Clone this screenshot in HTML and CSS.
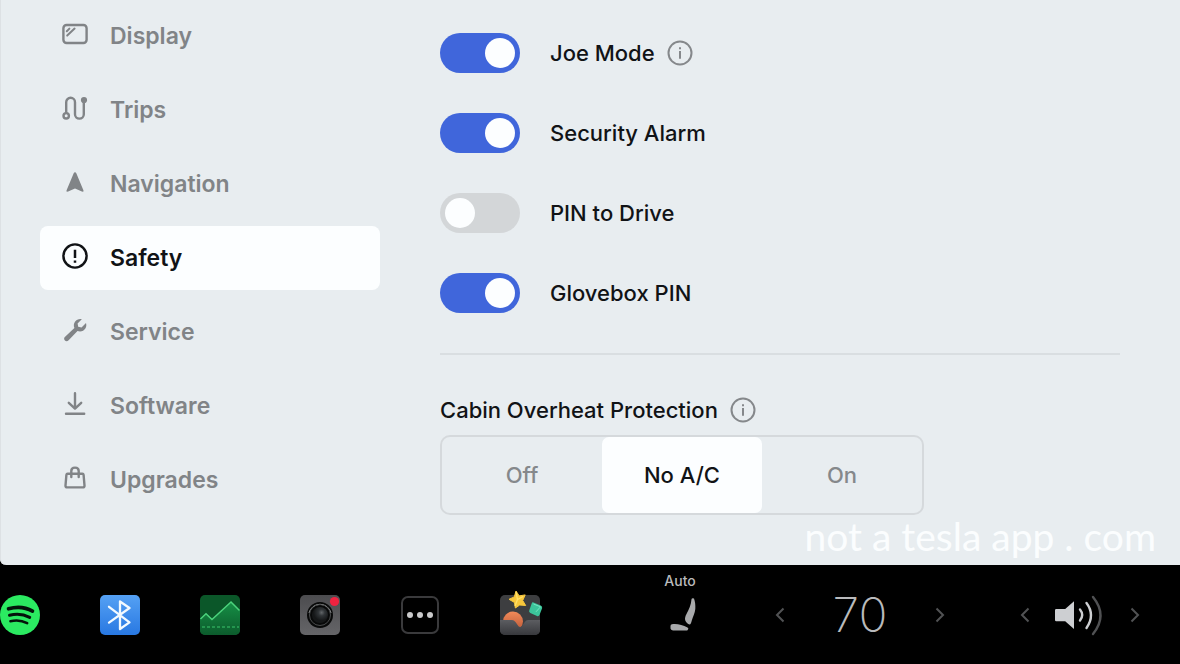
FILE: index.html
```html
<!DOCTYPE html>
<html lang="en">
<head>
<meta charset="utf-8">
<meta name="viewport" content="width=device-width, initial-scale=1">
<title>Safety settings</title>
<link rel="stylesheet" href="styles.css">
</head>
<body>
<main class="settings">
  <nav class="menu" aria-label="Settings">
    <a class="menu-item" href="#display">
      <svg class="menu-icon" viewBox="0 0 30 30" aria-hidden="true"><rect x="3.400" y="6" width="23.200" height="18" rx="3.200"/><path d="M6.800 12.200l2.600-2.600M7.200 16.600l7.400-7" stroke-width="2"/></svg>
      <span>Display</span>
    </a>
    <a class="menu-item" href="#trips">
      <svg class="menu-icon" viewBox="0 0 30 30" aria-hidden="true"><circle cx="6.200" cy="22.800" r="2.700"/><circle class="solid" cx="24" cy="7" r="3.100"/><path d="M6.200 19.600V9.200a4.400 4.400 0 0 1 8.800 0v12a4.400 4.400 0 0 0 8.800 0V8"/></svg>
      <span>Trips</span>
    </a>
    <a class="menu-item" href="#navigation">
      <svg class="menu-icon" viewBox="0 0 30 30" aria-hidden="true"><path class="solid" d="M15 5.200c.6 0 1 .3 1.300 1l7.100 17c.5 1.200-.5 1.900-1.500 1.400L15 21.400l-6.900 3.200c-1 .5-2-.2-1.500-1.400l7.100-17c.3-.7.7-1 1.300-1z"/></svg>
      <span>Navigation</span>
    </a>
    <a class="menu-item menu-item-active" href="#safety" aria-current="page">
      <svg class="menu-icon" viewBox="0 0 30 30" aria-hidden="true"><circle cx="15" cy="15" r="11.600"/><path d="M15 8.800v8.200M15 19.400v2.400" stroke-width="2.500" stroke-linecap="butt"/></svg>
      <span>Safety</span>
    </a>
    <a class="menu-item" href="#service">
      <svg class="menu-icon" viewBox="0 0 30 30" aria-hidden="true"><path class="solid" d="M21.800 4.200l-4.200 4.300 .6 3.300 3.300 .6 4.500-4.300c1 3.300-.4 6.300-2.900 7.700-1.900 1-3.800 1-5.600.3L8.600 25.200c-1.200 1.200-2.600 1.200-3.700.2-1.100-1.200-1-2.600.2-3.700l9.300-8.700c-.9-2-.8-4.300.6-6.200 1.600-2.200 4.200-3.200 6.800-2.600z"/></svg>
      <span>Service</span>
    </a>
    <a class="menu-item" href="#software">
      <svg class="menu-icon" viewBox="0 0 30 30" aria-hidden="true"><path d="M15 4.200v15.300M8.800 13.800l6.200 5.900 6.200-5.900M6 24.800h18.200"/></svg>
      <span>Software</span>
    </a>
    <a class="menu-item" href="#upgrades">
      <svg class="menu-icon" viewBox="0 0 30 30" aria-hidden="true"><path d="M7.600 10.800h14.800c.8 0 1.100.4 1.200 1.100l.9 10.600c.1 1.200-.5 1.900-1.600 1.900H7.100c-1.100 0-1.700-.7-1.600-1.900l.9-10.600c.1-.7.500-1.100 1.200-1.100zM11.300 14V8c0-4.500 7.400-4.500 7.400 0v6"/></svg>
      <span>Upgrades</span>
    </a>
  </nav>

  <section class="panel" id="safety">
    <div class="toggles">
      <div class="toggle-row">
        <input class="switch" type="checkbox" role="switch" id="joe-mode" checked>
        <label for="joe-mode">Joe Mode</label>
        <button class="info" type="button" aria-label="About Joe Mode">
          <svg viewBox="0 0 26 26" aria-hidden="true"><circle cx="13" cy="13" r="11.500"/><path d="M13 11v7.800M13 7.200v2"/></svg>
        </button>
      </div>
      <div class="toggle-row">
        <input class="switch" type="checkbox" role="switch" id="alarm" checked>
        <label for="alarm">Security Alarm</label>
      </div>
      <div class="toggle-row">
        <input class="switch" type="checkbox" role="switch" id="pin-drive">
        <label for="pin-drive">PIN to Drive</label>
      </div>
      <div class="toggle-row">
        <input class="switch" type="checkbox" role="switch" id="glovebox" checked>
        <label for="glovebox">Glovebox PIN</label>
      </div>
    </div>

    <div class="overheat">
      <div class="overheat-head">
        <h2 class="overheat-title" id="overheat-title">Cabin Overheat Protection</h2>
        <button class="info" type="button" aria-label="About Cabin Overheat Protection">
          <svg viewBox="0 0 26 26" aria-hidden="true"><circle cx="13" cy="13" r="11.500"/><path d="M13 11v7.800M13 7.200v2"/></svg>
        </button>
      </div>
      <div class="segments" role="radiogroup" aria-labelledby="overheat-title">
        <label class="segment"><input type="radio" name="overheat" value="off"><span>Off</span></label>
        <label class="segment"><input type="radio" name="overheat" value="no-ac" checked><span>No A/C</span></label>
        <label class="segment"><input type="radio" name="overheat" value="on"><span>On</span></label>
      </div>
    </div>
  </section>
  <p class="watermark">not a tesla app . com</p>
</main>

<footer class="dock">
  <div class="apps">
    <button class="app" type="button" aria-label="Spotify">
      <svg viewBox="0 0 40 40" aria-hidden="true"><circle cx="20" cy="20" r="20" fill="#2bea61"/><g fill="none" stroke="#04130a" stroke-linecap="round"><path d="M8.500 13.800c8-2.300 17.300-1.500 24 2.300" stroke-width="3.600"/><path d="M9.500 20.300c6.800-1.900 14.200-1.100 20.200 2.100" stroke-width="3"/><path d="M10.400 26.300c5.700-1.500 11.700-.8 16.800 1.900" stroke-width="2.500"/></g></svg>
    </button>
    <button class="app" type="button" aria-label="Bluetooth">
      <svg viewBox="0 0 40 40" aria-hidden="true"><defs><linearGradient id="bt" x2="0" y2="1"><stop stop-color="#55a1f4"/><stop offset="1" stop-color="#2878e2"/></linearGradient></defs><rect width="40" height="40" rx="5" fill="url(#bt)"/><path d="M9 11.800l20.500 15.600L20 34V6.500l9.500 6.500L9 27.600" fill="none" stroke="#f3faff" stroke-width="2.300" stroke-linejoin="round" stroke-linecap="round"/></svg>
    </button>
    <button class="app" type="button" aria-label="Energy">
      <svg viewBox="0 0 40 40" aria-hidden="true"><defs><linearGradient id="en" x2="0" y2="1"><stop stop-color="#168f46"/><stop offset="1" stop-color="#0c5b2c"/></linearGradient></defs><rect width="40" height="40" rx="5" fill="#0b5729"/><path d="M0 24l6-5.500 6 6L31 7l9 9v19a5 5 0 0 1-5 5H5a5 5 0 0 1-5-5z" fill="url(#en)"/><path d="M.5 24L6 18.800l6 5.700L31 7l8.500 8.500" fill="none" stroke="#4bd37c" stroke-width="1.500"/><path d="M2 32h37" stroke="#2ca75a" stroke-width="1.300" stroke-dasharray="3 2"/></svg>
    </button>
    <button class="app" type="button" aria-label="Dashcam">
      <svg viewBox="0 0 40 40" aria-hidden="true"><defs><linearGradient id="cam" x2="0" y2="1"><stop stop-color="#4c4c4f"/><stop offset="1" stop-color="#656568"/></linearGradient><radialGradient id="lens" cx=".6" cy=".35"><stop stop-color="#626669"/><stop offset=".4" stop-color="#303437"/><stop offset="1" stop-color="#151718"/></radialGradient></defs><rect width="40" height="40" rx="5" fill="url(#cam)"/><circle cx="20" cy="20" r="13" fill="#080909"/><path d="M9 18a11.300 11.300 0 0 1 22 0" fill="none" stroke="#a9abac" stroke-width="1"/><circle cx="20" cy="20" r="10.500" fill="none" stroke="#494b4c"/><circle cx="20" cy="20" r="8" fill="url(#lens)"/><circle cx="34.500" cy="6.500" r="4.600" fill="#ef2340"/></svg>
    </button>
    <button class="app" type="button" aria-label="All apps">
      <svg viewBox="0 0 40 40" aria-hidden="true"><rect x="2" y="2" width="36" height="36" rx="6" fill="none" stroke="#3a3a3c" stroke-width="2"/><g fill="#cacacb"><circle cx="10" cy="20" r="3"/><circle cx="20" cy="20" r="3"/><circle cx="30" cy="20" r="3"/></g></svg>
    </button>
    <button class="app" type="button" aria-label="Toybox">
      <svg viewBox="0 0 40 40" aria-hidden="true"><defs><linearGradient id="toy" x2="0" y2="1"><stop stop-color="#5c5d61"/><stop offset="1" stop-color="#37383c"/></linearGradient><linearGradient id="ball" x2="0" y2="1"><stop stop-color="#f18a59"/><stop offset="1" stop-color="#b95736"/></linearGradient></defs><rect width="40" height="40" rx="5" fill="#3d3e40"/><circle cx="13" cy="26.500" r="10" fill="url(#ball)"/><path d="M0 25h12q2 0 3.500 2l3 4.200q1.500 1.600 3.300 0l3-4.200q1.500-2 3.500-2H40v10a5 5 0 0 1-5 5H5a5 5 0 0 1-5-5z" fill="url(#toy)"/><path d="M16-4l3.200 4.900 6-1-2.500 5.600 3 5-6-.5-4.300 3-1-5.600L9 4.300l5.300-2.400z" fill="#f7c73c" stroke="#f7c73c" stroke-linejoin="round"/><path d="M16-3l1.500 7.500L23 1.500M17.500 4.500L15 11" fill="none" stroke="#ffe16a" stroke-width="1.300"/><path d="M33.500 7.500l7.200 3q2 1 1.400 2.700L39.500 20q-.8 1.700-2.500.9l-6.700-3q-1.800-.9-1-2.600l2.400-6.900q.6-1.600 1.800-.9z" fill="#3cc59b"/><path d="M33.500 9l7 2.800-4.500 5" fill="none" stroke="#76e6c2"/></svg>
    </button>
  </div>

  <div class="climate">
    <button class="seat" type="button">
      <span class="seat-label">Auto</span>
      <svg class="seat-icon" viewBox="0 0 40 40" aria-hidden="true"><path d="M31.500 4.200q.2-1 1.300-1l1.200.2c1.100 3 1.600 7 1.300 10.600-.4 4-2.200 7.500-3.500 11.500-.7 2.500-1.200 3.900-2.300 3.900-1.600-.4-3.600-2.200-4.300-4.200-.5-2 .1-4 1.300-6.200 2.500-4.500 4.600-9.500 5-14.800zM10.500 31q0-1.500 1.500-1.800c5-.7 10.500.6 15.500 3.200q1.500.8.500 2l-.8 1H13q-2.300 0-2.500-1.800z"/></svg>
    </button>
    <div class="stepper">
      <button class="step" type="button" aria-label="Lower temperature"><svg viewBox="0 0 20 20" aria-hidden="true"><path d="M13.500 3.500L7 10l6.500 6.500"/></svg></button>
      <output class="temperature">70</output>
      <button class="step" type="button" aria-label="Raise temperature"><svg viewBox="0 0 20 20" aria-hidden="true"><path d="M6.500 3.500L13 10l-6.500 6.500"/></svg></button>
    </div>
  </div>

  <div class="stepper volume">
    <button class="step" type="button" aria-label="Volume down"><svg viewBox="0 0 20 20" aria-hidden="true"><path d="M13.500 3.500L7 10l6.500 6.500"/></svg></button>
    <button class="speaker" type="button" aria-label="Mute"><svg viewBox="0 0 50 44" aria-hidden="true"><path d="M1.200 16h9L19 8.300V36l-8.800-7.800h-9q-1.200 0-1.200-1.200V17.200Q0 16 1.200 16z" fill="#cdcfd2"/><g fill="none" stroke-width="2.400" stroke-linecap="round"><path d="M25 16.500q4.400 5.500 0 11" stroke="#cdcfd2"/><path d="M31.500 10q9 12 0 25" stroke="#cdcfd2"/><path d="M38 4q15 18.500 0 37" stroke="#505153"/></g></svg></button>
    <button class="step" type="button" aria-label="Volume up"><svg viewBox="0 0 20 20" aria-hidden="true"><path d="M6.500 3.500L13 10l-6.500 6.500"/></svg></button>
  </div>
</footer>
</body>
</html>
```
FILE: styles.css
```css
* {
  box-sizing: border-box;
}

body {
  margin: 0;
  min-height: 100vh;
  display: flex;
  flex-direction: column;
  background: #000;
  color: #111316;
  font-family: Inter, "Liberation Sans", sans-serif;
  font-size: 22px;
  font-weight: 500;
  line-height: 28px;
}

button {
  padding: 0;
  border: 0;
  background: none;
  color: inherit;
  font: inherit;
  cursor: pointer;
}

svg {
  display: block;
  overflow: visible;
}

.settings {
  position: relative;
  flex: 1;
  display: grid;
  grid-template-columns: 340px 1fr;
  gap: 60px;
  padding: 4px 60px 20px 40px;
  box-shadow: inset 1px 0 #dde1e4;
  border-radius: 0 0 0 6px;
  background: #e8edf0;
}

.menu {
  display: flex;
  flex-direction: column;
  gap: 10px;
}

.menu-item {
  display: flex;
  align-items: center;
  gap: 20px;
  height: 64px;
  padding: 0 20px;
  border-radius: 8px;
  color: #818487;
  font-size: 23px;
  font-weight: 600;
  text-decoration: none;
}

.menu-item-active {
  background: #fcfeff;
  color: #111316;
}

.menu-icon {
  width: 30px;
  height: 30px;
  margin-bottom: 4px;
  fill: none;
  stroke: currentColor;
  stroke-width: 2.4;
  stroke-linecap: round;
  stroke-linejoin: round;
}

.menu-icon .solid {
  fill: currentColor;
  stroke: none;
}

.panel {
  padding-top: 29px;
}

.toggles {
  display: flex;
  flex-direction: column;
  gap: 40px;
  padding-bottom: 40px;
  border-bottom: 2px solid #d9dee1;
}

.toggle-row {
  display: flex;
  align-items: center;
}

.toggle-row label {
  margin-left: 30px;
}

.switch {
  appearance: none;
  display: flex;
  align-items: center;
  width: 80px;
  height: 40px;
  margin: 0;
  padding: 0 5px;
  border-radius: 20px;
  background: #d3d6d8;
  cursor: pointer;
}

.switch::before {
  content: "";
  width: 30px;
  height: 30px;
  border-radius: 50%;
  background: #fcfeff;
}

.switch:checked {
  justify-content: flex-end;
  background: #4066db;
}

.info {
  width: 26px;
  height: 26px;
  margin-left: 12px;
}

.info svg {
  fill: none;
  stroke: #85888b;
  stroke-width: 2;
}

.overheat {
  padding-top: 41px;
}

.overheat-head {
  display: flex;
  align-items: center;
}

.overheat-title {
  margin: 0;
  font: inherit;
}

.segments {
  display: grid;
  grid-template-columns: repeat(3, 1fr);
  max-width: 484px;
  height: 80px;
  margin-top: 11px;
  border: 2px solid #d5d9dc;
  border-radius: 10px;
}

.segment {
  display: grid;
  color: #85888b;
  cursor: pointer;
}

.segment input {
  appearance: none;
  grid-area: 1 / 1;
  margin: 0;
  border-radius: 7px;
}

.segment span {
  grid-area: 1 / 1;
  place-self: center;
}

.segment input:checked {
  background: #fcfeff;
}

.segment input:checked + span {
  color: #111316;
}

.watermark {
  position: absolute;
  right: 24px;
  bottom: 5px;
  margin: 0;
  color: #fbfdfe;
  font-family: Lato, sans-serif;
  font-size: 39px;
  font-weight: 400;
  line-height: 48px;
}

.dock {
  display: flex;
  align-items: center;
  height: 99px;
  padding-right: 35px;
  color: #b9babc;
}

.apps {
  display: flex;
  gap: 60px;
}

.app {
  width: 40px;
  height: 40px;
}

.climate {
  display: flex;
  align-items: center;
  gap: 70px;
  margin-left: auto;
}

.seat {
  display: flex;
  flex-direction: column;
  align-items: center;
  gap: 6px;
  width: 40px;
  padding-bottom: 22px;
}

.seat-label {
  font-size: 14px;
  line-height: 16px;
}

.seat-icon {
  width: 40px;
  height: 40px;
  fill: #a8a9ab;
}

.stepper {
  display: flex;
  align-items: center;
  justify-content: space-between;
  width: 180px;
}

.step {
  width: 20px;
  height: 20px;
}

.step svg {
  fill: none;
  stroke: #515254;
  stroke-width: 2;
}

.temperature {
  font-size: 48px;
  font-weight: 200;
  line-height: 56px;
}

.volume {
  width: 130px;
  margin-left: 65px;
}

.speaker {
  width: 50px;
  height: 44px;
}
```
